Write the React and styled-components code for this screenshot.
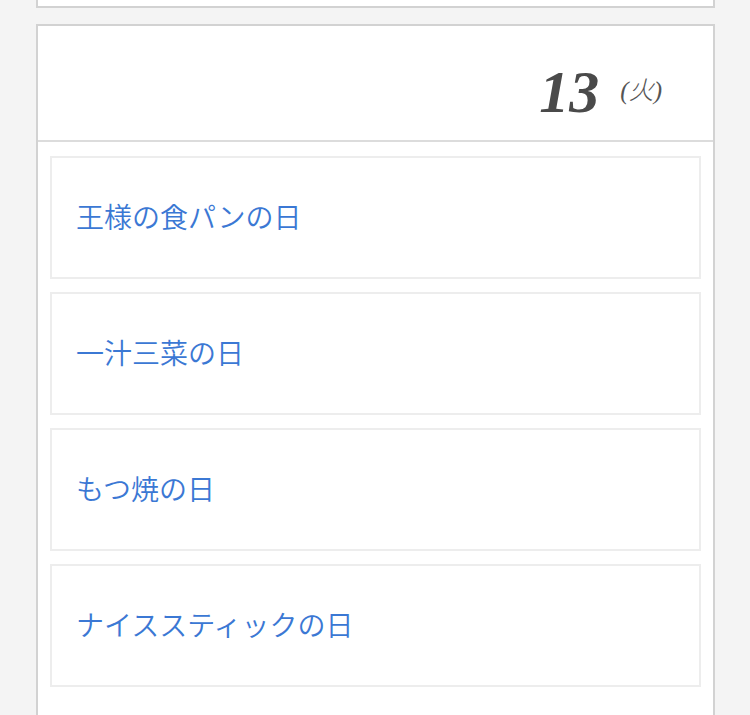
import React from "react";
import styled, { createGlobalStyle } from "styled-components";

const GlobalStyle = createGlobalStyle`
  html, body {
    margin: 0;
    padding: 0;
    background: #f4f4f4;
  }
  body {
    font-family: "Noto Sans CJK JP", "Noto Sans", sans-serif;
  }
`;

const Page = styled.div`
  padding: 0 35px 0 36px;
  display: flex;
  flex-direction: column;
  gap: 16px;
  margin-top: -10px;
`;

const Card = styled.section`
  background: #fff;
  border: 2px solid #d2d2d2;
  box-sizing: border-box;
`;

const PrevCard = styled(Card)`
  height: 18px;
`;

const DayHeader = styled.header`
  height: 116px;
  box-sizing: border-box;
  border-bottom: 2px solid #dcdcdc;
  display: flex;
  justify-content: flex-end;
  align-items: center;
  padding: 18px 51px 0 0;
  gap: 21px;
`;

const DayNum = styled.span`
  font-family: "Liberation Serif", "Times New Roman", serif;
  font-style: italic;
  font-weight: bold;
  font-size: 60px;
  color: #4a4a4a;
  line-height: 1;
`;

const Weekday = styled.span`
  font-family: "Liberation Serif", "Noto Sans CJK JP", serif;
  font-style: italic;
  font-weight: 300;
  font-size: 25px;
  color: #555;
  line-height: 1;
  margin-top: -4px;
`;

const EventList = styled.ul`
  list-style: none;
  margin: 0;
  padding: 14px 12px 40px;
  display: flex;
  flex-direction: column;
  gap: 13px;
`;

const EventItem = styled.li`
  height: 123px;
  box-sizing: border-box;
  border: 2px solid #ededed;
  display: flex;
  align-items: center;
  padding: 0 24px 4px;
`;

const EventLink = styled.a`
  font-family: "Noto Sans CJK JP", sans-serif;
  font-size: 28px;
  font-weight: 350;
  color: #3b78d4;
  text-decoration: none;
  line-height: 1;
`;

const events = ["王様の食パンの日", "一汁三菜の日", "もつ焼の日", "ナイススティックの日"];

export default function App() {
  return (
    <>
      <GlobalStyle />
      <Page>
        <PrevCard />
        <Card>
          <DayHeader>
            <DayNum>13</DayNum>
            <Weekday>(火)</Weekday>
          </DayHeader>
          <EventList>
            {events.map((name) => (
              <EventItem key={name}>
                <EventLink href="#">{name}</EventLink>
              </EventItem>
            ))}
          </EventList>
        </Card>
      </Page>
    </>
  );
}
